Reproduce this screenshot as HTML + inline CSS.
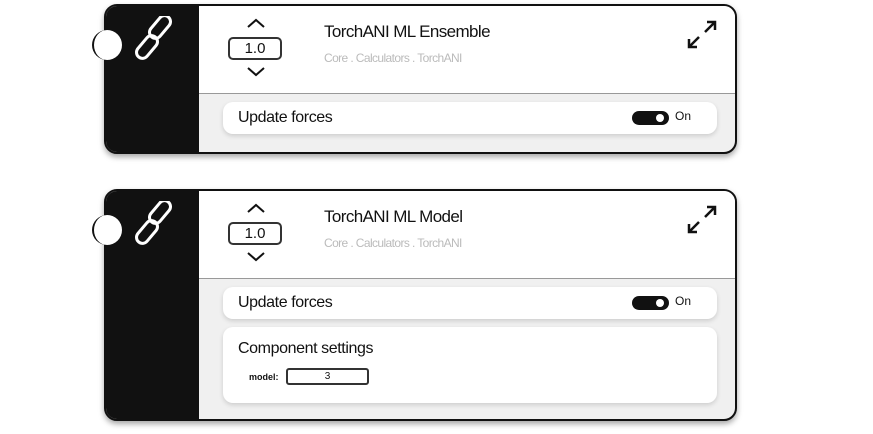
<!DOCTYPE html>
<html><head><style>
*{margin:0;padding:0;box-sizing:border-box}
body{width:873px;height:434px;background:#fff;position:relative;overflow:hidden;font-family:"Liberation Sans",sans-serif;color:#111}
.card{position:absolute;left:104px;width:633px;border:2px solid #111;border-radius:13px;overflow:hidden;background:#f0f0f0;box-shadow:0 3px 6px rgba(0,0,0,.35)}
.side{position:absolute;left:0;top:0;bottom:0;width:93px;background:#111}
.head{position:absolute;left:93px;right:0;top:0;height:88px;background:#fff;border-bottom:1px solid #999}
.abs{position:absolute}
.title{font-size:17px;letter-spacing:-0.6px}
.sub{font-size:12px;color:#bbb;letter-spacing:-0.6px}
.num{width:54px;height:23px;border:2px solid #333;border-radius:5px;text-align:center;font-size:15px;line-height:19px}
.row{position:absolute;left:223px;width:494px;background:#fff;border-radius:10px;box-shadow:0 2px 5px rgba(0,0,0,.15)}
.lbl{font-size:16px;letter-spacing:-0.4px}
.tog{width:37px;height:14px;background:#111;border-radius:7px}
.tog::after{content:"";position:absolute;right:5px;top:3px;width:8px;height:8px;border-radius:50%;background:#fff}
.node{width:30px;height:30px;border-radius:50%;background:#fff;border-left:2px solid #111}
</style></head><body>

<div class="card" style="top:4px;height:150px"><div class="side"></div><div class="head"></div></div>
<div class="card" style="top:189px;height:232px"><div class="side"></div><div class="head"></div></div>

<!-- card 1 contents -->
<div class="abs node" style="left:92px;top:30px"></div>
<svg class="abs" style="left:133px;top:16px" width="42" height="48" viewBox="0 0 42 48" fill="none" stroke="#fff" stroke-width="3">
<rect x="21" y="-2" width="12" height="26" rx="6" transform="rotate(40 27 11)"/>
<rect x="8" y="18" width="12" height="26" rx="6" transform="rotate(40 14 31)"/>
</svg>
<svg class="abs" style="left:246px;top:18px" width="20" height="60" fill="none" stroke="#111" stroke-width="2"><path d="M2 9 L10 2 L18 9"/><path d="M2 50 L10 57 L18 50"/></svg>
<div class="abs num" style="left:228px;top:37px">1.0</div>
<div class="abs title" style="left:324px;top:22px">TorchANI ML Ensemble</div>
<div class="abs sub" style="left:324px;top:51px">Core . Calculators . TorchANI</div>
<svg class="abs" style="left:685px;top:20px" width="34" height="30" fill="none" stroke="#111" stroke-width="2.5"><path d="M20 12 L30 2 M22 2 L30 2 L30 10"/><path d="M14 17 L4 27 M4 19 L4 27 L12 27"/></svg>
<div class="row" style="top:102px;height:32px"><div class="abs lbl" style="left:15px;top:7px">Update forces</div><div class="abs tog" style="left:409px;top:9px"></div><div class="abs" style="left:452px;top:7px;font-size:12px">On</div></div>

<!-- card 2 contents -->
<div class="abs node" style="left:92px;top:215px"></div>
<svg class="abs" style="left:133px;top:201px" width="42" height="48" viewBox="0 0 42 48" fill="none" stroke="#fff" stroke-width="3">
<rect x="21" y="-2" width="12" height="26" rx="6" transform="rotate(40 27 11)"/>
<rect x="8" y="18" width="12" height="26" rx="6" transform="rotate(40 14 31)"/>
</svg>
<svg class="abs" style="left:246px;top:203px" width="20" height="60" fill="none" stroke="#111" stroke-width="2"><path d="M2 9 L10 2 L18 9"/><path d="M2 50 L10 57 L18 50"/></svg>
<div class="abs num" style="left:228px;top:222px">1.0</div>
<div class="abs title" style="left:324px;top:207px">TorchANI ML Model</div>
<div class="abs sub" style="left:324px;top:236px">Core . Calculators . TorchANI</div>
<svg class="abs" style="left:685px;top:205px" width="34" height="30" fill="none" stroke="#111" stroke-width="2.5"><path d="M20 12 L30 2 M22 2 L30 2 L30 10"/><path d="M14 17 L4 27 M4 19 L4 27 L12 27"/></svg>
<div class="row" style="top:287px;height:32px"><div class="abs lbl" style="left:15px;top:7px">Update forces</div><div class="abs tog" style="left:409px;top:9px"></div><div class="abs" style="left:452px;top:7px;font-size:12px">On</div></div>
<div class="row" style="top:327px;height:76px"><div class="abs lbl" style="left:15px;top:13px">Component settings</div>
<div class="abs" style="left:26px;top:45px;font-size:9px;font-weight:bold">model:</div>
<div class="abs" style="left:63px;top:41px;width:83px;height:17px;border:2px solid #333;border-radius:3px;font-size:10px;text-align:center;line-height:13px">3</div></div>
</body></html>
